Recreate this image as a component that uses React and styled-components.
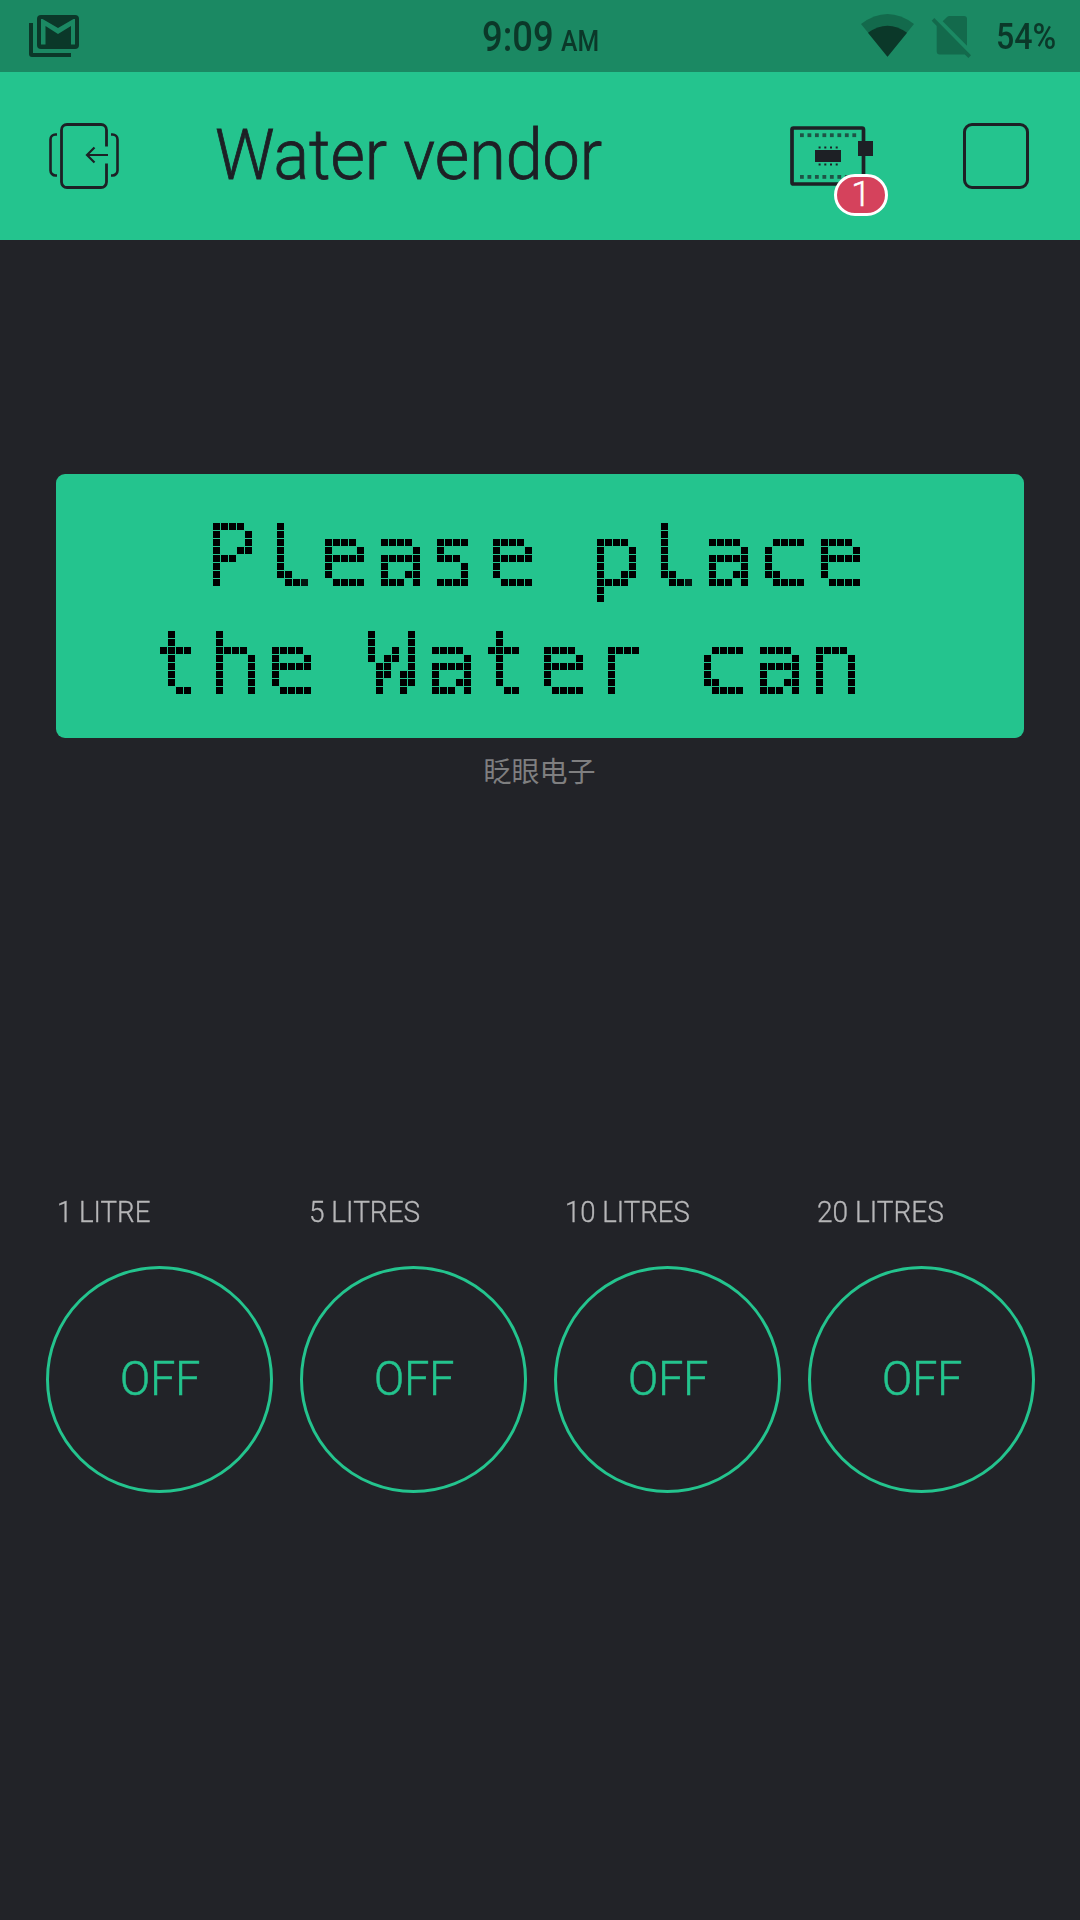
import React, { useLayoutEffect, useRef, useState } from 'react';
import styled, { createGlobalStyle } from 'styled-components';

const GlobalStyle = createGlobalStyle`
  * { box-sizing: border-box; }
  body { margin: 0; background: #222328; }
`;

const Screen = styled.div`
  display: flex;
  flex-direction: column;
  width: 1080px;
  height: 1920px;
  overflow: hidden;
  background: #222328;
  font-family: Roboto, 'Open Sans', sans-serif;
`;

const StatusBar = styled.header`
  display: grid;
  grid-template-columns: 482px 1fr auto;
  align-items: center;
  height: 72px;
  padding-right: 24px;
  background: #1b8963;
  color: #0b3829;
`;

const StatusIcons = styled.div`
  display: flex;
  align-items: center;
  padding-left: 29px;
`;

const Clock = styled.div`
  display: flex;
  align-items: baseline;
  gap: 7px;
  padding-top: 6px;
`;

const StatusRight = styled.div`
  display: flex;
  align-items: center;
  height: 72px;
  padding-top: 2px;
`;

const Glyph = styled.svg`
  display: block;
  flex: none;
  overflow: visible;
  width: ${(p) => p.$w}px;
  height: ${(p) => p.$h}px;
  margin: ${(p) => p.$m || '0'};
`;

const TextBox = styled.span`
  display: block;
  flex: none;
  width: ${(p) => p.$width}px;
  font-size: ${(p) => p.$size}px;
  font-weight: ${(p) => p.$weight || 400};
  line-height: ${(p) => p.$line || p.$size}px;
  -webkit-text-stroke: ${(p) => (p.$weight === 300 ? '0.012em' : '0')} currentColor;
  white-space: nowrap;
`;

const TextInner = styled.span`
  display: inline-block;
  transform-origin: left center;
`;

function FitText({ width, size, weight, line, children }) {
  const ref = useRef(null);
  const [scale, setScale] = useState(1);
  useLayoutEffect(() => {
    const natural = ref.current.offsetWidth;
    if (natural) setScale(width / natural);
  }, [width, size, weight, children]);
  return (
    <TextBox $width={width} $size={size} $weight={weight} $line={line}>
      <TextInner ref={ref} style={{ transform: `scaleX(${scale})` }}>{children}</TextInner>
    </TextBox>
  );
}

const AppBar = styled.nav`
  display: flex;
  align-items: center;
  height: 168px;
  padding: 0 51px 0 49px;
  background: #24c48e;
  color: #1d2025;
`;

const Title = styled.h1`
  flex: 1;
  margin: 0;
  padding: 0 0 2px 96px;
`;

const BoardButton = styled.div`
  position: relative;
  width: 83px;
  height: 60px;
  margin-right: 90px;
`;

const Badge = styled.span`
  position: absolute;
  left: 44px;
  top: 48px;
  display: flex;
  align-items: center;
  justify-content: center;
  width: 54px;
  height: 42px;
  border: 3px solid #fff;
  border-radius: 21px;
  background: #d5425c;
  color: #fff;
  font-size: 35px;
  font-weight: 300;
  line-height: 36px;
  -webkit-text-stroke: 0.5px #fff;
`;

const StopButton = styled.div`
  width: 66px;
  height: 66px;
  border: 3px solid #1d2025;
  border-radius: 9px;
`;

const Lcd = styled.section`
  height: 264px;
  margin: 234px 56px 0;
  padding: 27px 0 0 92px;
  border-radius: 9px;
  background: #24c48e;
`;

const LcdLine = styled.div`
  width: 740px;
  height: 108px;
  margin-left: ${(p) => p.$indent}px;
  color: #000;
  font-family: 'DejaVu Sans Mono', monospace;
  font-size: 88px;
  line-height: 108px;
  letter-spacing: 3.02px;
  word-spacing: -8px;
  white-space: nowrap;
  filter: url(#dot-matrix);
`;

const FilterDefs = styled.svg`
  display: block;
  width: 0;
  height: 0;
  overflow: hidden;
`;

const Caption = styled.p`
  margin: 12px 0 0;
  padding-right: 1px;
  color: #7f7f80;
  font-family: 'Noto Sans CJK SC', sans-serif;
  font-size: 28px;
  font-weight: 400;
  line-height: 40px;
  text-align: center;
`;

const Controls = styled.section`
  display: grid;
  grid-template-columns: repeat(4, 254px);
  margin: 402px 0 0 45px;
`;

const Control = styled.div`
  display: flex;
  flex-direction: column;
`;

const Label = styled.div`
  height: 40px;
  padding-left: ${(p) => p.$inset}px;
  color: #b6b6b8;
`;

const RoundButton = styled.button`
  display: flex;
  align-items: center;
  justify-content: center;
  width: 227px;
  height: 227px;
  margin: 34px 0 0 0.5px;
  padding: 0 0 2px 1px;
  border: 3px solid #24c48e;
  border-radius: 50%;
  background: none;
  color: #24c48e;
  font-family: inherit;
  text-align: left;
`;

const controls = [
  { label: '1 LITRE', width: 93, inset: 12 },
  { label: '5 LITRES', width: 111, inset: 10 },
  { label: '10 LITRES', width: 125, inset: 12 },
  { label: '20 LITRES', width: 127, inset: 10 },
];

const MailStackIcon = () => (
  <Glyph $w={50} $h={42} viewBox="29 15 50 42">
    <path d="M29 23h4v30h38v4H32a3 3 0 0 1-3-3z" fill="#0b3829" />
    <rect x="37" y="15" width="42" height="34" rx="4" fill="#0b3829" />
    <path d="M41 19h1.500L58 28l15.500-9H75v25.500h-4V26l-13 8-12.500-8v18.500H41z" fill="#1b8963" />
  </Glyph>
);

const WifiIcon = () => (
  <Glyph $w={53} $h={43} $m="0 18px 3px 0" viewBox="861 14 53 43">
    <path d="M861 24q26.500-20 53 0l-26.500 32.700z" fill="#136a4c" />
    <path d="M868 32.700q19.500-14 39 0l-19.500 24z" fill="#0b3829" />
  </Glyph>
);

const NoSimIcon = () => (
  <Glyph $w={39} $h={42} $m="0 25px 0 0" viewBox="933 16 39 42">
    <path d="M943.700 21.300l4.300-4.300q1-1 2.500-1h14.500a3 3 0 0 1 3 3v26.700z" fill="#136a4c" />
    <path d="M935.300 18l36.700 37.300-2.600 2.700-3.600-3.400h-25.100a3 3 0 0 1-3-3V26l-5-5.300z" fill="#136a4c" />
  </Glyph>
);

const ExitIcon = () => (
  <Glyph $w={70} $h={66} viewBox="49 123 70 66" fill="none" stroke="#1d2025" strokeWidth="2.800">
    <path d="M106.500 146.500V130a5.500 5.500 0 0 0-5.500-5.500H67a5.500 5.500 0 0 0-5.500 5.500v52a5.500 5.500 0 0 0 5.500 5.500h34a5.500 5.500 0 0 0 5.500-5.500v-18.500" />
    <path d="M57 134.500h-1.500a5 5 0 0 0-5 5v31a5 5 0 0 0 5 5H57M111 134.500h1.500a5 5 0 0 1 5 5v31a5 5 0 0 1-5 5H111" strokeWidth="2.600" />
    <path d="M108 155H87M94.500 147.500L87 155l7.500 7.500" strokeWidth="2.200" />
  </Glyph>
);

const BoardIcon = () => (
  <Glyph $w={83} $h={60} viewBox="790 126 83 60" fill="#1d2025">
    <rect x="792" y="128" width="71.500" height="56" rx="1.500" fill="none" stroke="#1d2025" strokeWidth="3.700" />
    <rect x="858" y="141" width="15" height="15" />
    <rect x="815" y="150" width="26" height="12" />
    {[0, 1, 2, 3].map((i) => (
      <g key={i}>
        <rect x={818.6 + i * 5.7} y="146.500" width="2" height="2" />
        <rect x={818.6 + i * 5.7} y="163.500" width="2" height="2" />
      </g>
    ))}
    {[0, 1, 2, 3, 4, 5, 6, 7].map((i) => (
      <g key={i} fill="#1f5446">
        <rect x={800 + i * 7.48} y="133.300" width="3.800" height="3.800" />
        <rect x={800 + i * 7.48} y="175" width="3.800" height="3.800" />
      </g>
    ))}
  </Glyph>
);

/* Samples the text once per 8px cell and grows each hit into a 7px square pixel. */
const DotMatrixFilter = () => (
  <FilterDefs aria-hidden="true">
    <filter id="dot-matrix" filterUnits="userSpaceOnUse" primitiveUnits="userSpaceOnUse" x="0" y="0" width="740" height="112" colorInterpolationFilters="sRGB">
      <feFlood x="4" y="1" width="1" height="1" floodColor="#000" result="dot" />
      <feComposite in="dot" in2="dot" operator="over" x="0" y="0" width="8" height="8" result="cell" />
      <feTile in="cell" result="grid" />
      <feComponentTransfer in="SourceGraphic" result="solid">
        <feFuncA type="linear" slope="60" intercept="-25" />
      </feComponentTransfer>
      <feComposite in="solid" in2="grid" operator="in" result="hits" />
      <feMorphology in="hits" operator="dilate" radius="3" />
    </filter>
  </FilterDefs>
);

export default function App() {
  return (
    <Screen>
      <GlobalStyle />
      <StatusBar>
        <StatusIcons><MailStackIcon /></StatusIcons>
        <Clock>
          <FitText width={72} size={42} weight={500} line={50}>9:09</FitText>
          <FitText width={38} size={30} weight={500} line={50}>AM</FitText>
        </Clock>
        <StatusRight>
          <WifiIcon />
          <NoSimIcon />
          <FitText width={60} size={37} weight={500} line={72}>54%</FitText>
        </StatusRight>
      </StatusBar>
      <AppBar>
        <ExitIcon />
        <Title><FitText width={387} size={70} weight={300} line={84}>Water vendor</FitText></Title>
        <BoardButton>
          <BoardIcon />
          <Badge>1</Badge>
        </BoardButton>
        <StopButton />
      </AppBar>
      <Lcd>
        <DotMatrixFilter />
        <LcdLine $indent={56}>Please place</LcdLine>
        <LcdLine $indent={3}>the Water can</LcdLine>
      </Lcd>
      <Caption>眨眼电子</Caption>
      <Controls>
        {controls.map((c) => (
          <Control key={c.label}>
            <Label $inset={c.inset}><FitText width={c.width} size={30} weight={300} line={40}>{c.label}</FitText></Label>
            <RoundButton><FitText width={80} size={49} weight={300} line={56}>OFF</FitText></RoundButton>
          </Control>
        ))}
      </Controls>
    </Screen>
  );
}
